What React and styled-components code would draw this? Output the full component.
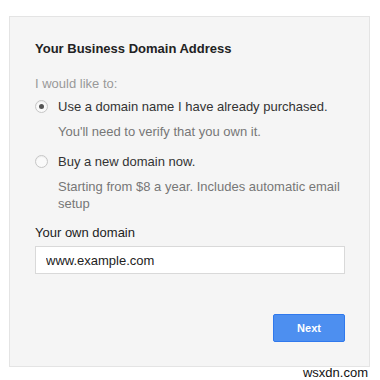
import styled, { createGlobalStyle } from "styled-components";

const Global = createGlobalStyle`
  html, body {
    margin: 0;
    padding: 0;
    background: #ffffff;
  }
  body {
    font-family: "Liberation Sans", Arial, sans-serif;
  }
`;

const Page = styled.div`
  width: 380px;
  height: 380px;
  padding: 16px 10px 0 9px;
  box-sizing: border-box;
  position: relative;
`;

const Card = styled.div`
  height: 351px;
  box-sizing: border-box;
  background: #f5f5f5;
  border: 1px solid #e4e4e4;
  padding: 24px 25px 0 25px;
  display: flex;
  flex-direction: column;
`;

const Title = styled.div`
  font-size: 13px;
  font-weight: bold;
  color: #222;
  line-height: 16px;
`;

const Prompt = styled.div`
  margin-top: 19px;
  font-size: 13px;
  color: #999;
  line-height: 16px;
`;

const Options = styled.div`
  margin-top: 6px;
  display: flex;
  flex-direction: column;
  gap: 13px;
`;

const Option = styled.label`
  display: grid;
  grid-template-columns: 23px 1fr;
  align-items: start;
`;

const Radio = styled.span`
  width: 13px;
  height: 13px;
  margin-top: 2px;
  border-radius: 50%;
  border: 1px solid #c6c6c6;
  background: #fafafa;
  box-shadow: inset 0 1px 1px rgba(0, 0, 0, 0.06);
  box-sizing: border-box;
  display: flex;
  align-items: center;
  justify-content: center;
  &::after {
    content: "";
    width: 5px;
    height: 5px;
    border-radius: 50%;
    background: ${(p) => (p.checked ? "#555" : "transparent")};
  }
`;

const OptionLabel = styled.div`
  font-size: 13px;
  color: #333;
  line-height: 17px;
`;

const OptionHint = styled.div`
  font-size: 13px;
  color: #777;
  line-height: 17px;
  margin-top: 8px;
`;

const FieldLabel = styled.div`
  margin-top: 13px;
  font-size: 13px;
  color: #222;
  line-height: 16px;
`;

const Input = styled.input`
  margin-top: 5px;
  width: 310px;
  height: 28px;
  box-sizing: border-box;
  border: 1px solid #d9d9d9;
  background: #fff;
  padding: 0 10px;
  font-family: inherit;
  font-size: 13px;
  color: #222;
  outline: none;
`;

const Actions = styled.div`
  margin-top: 40px;
  width: 310px;
  display: flex;
  justify-content: flex-end;
`;

const Button = styled.button`
  width: 72px;
  height: 28px;
  border: 1px solid #3079ed;
  border-radius: 2px;
  background: #4d8ff0;
  color: #fff;
  font-family: inherit;
  font-size: 11px;
  font-weight: bold;
  cursor: pointer;
`;

const Watermark = styled.div`
  position: absolute;
  right: 12px;
  bottom: 0;
  font-size: 13px;
  color: #111;
  line-height: 14px;
`;

export default function App() {
  return (
    <>
      <Global />
      <Page>
        <Card>
          <Title>Your Business Domain Address</Title>
          <Prompt>I would like to:</Prompt>
          <Options>
            <Option>
              <Radio checked />
              <div>
                <OptionLabel>Use a domain name I have already purchased.</OptionLabel>
                <OptionHint>You'll need to verify that you own it.</OptionHint>
              </div>
            </Option>
            <Option>
              <Radio />
              <div>
                <OptionLabel>Buy a new domain now.</OptionLabel>
                <OptionHint>
                  Starting from $8 a year. Includes automatic email setup
                </OptionHint>
              </div>
            </Option>
          </Options>
          <FieldLabel>Your own domain</FieldLabel>
          <Input defaultValue="www.example.com" />
          <Actions>
            <Button>Next</Button>
          </Actions>
        </Card>
        <Watermark>wsxdn.com</Watermark>
      </Page>
    </>
  );
}
